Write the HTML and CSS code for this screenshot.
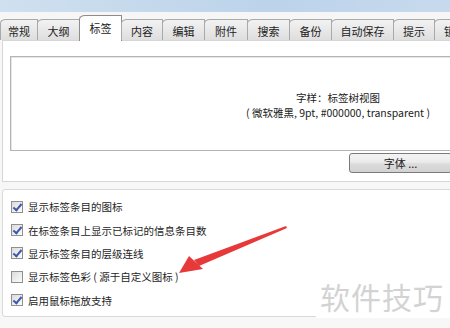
FILE: index.html
```html
<!DOCTYPE html>
<html lang="zh-CN">
<head>
    <meta charset="UTF-8">
    <title>标签选项</title>
    <link rel="stylesheet" href="styles.css">
</head>
<body>
    <div class="window">
        <div class="titlebar"></div>
        <div class="tabs">
            <div class="tab w37">常规</div>
            <div class="tab w42">大纲</div>
            <div class="tab w42 active">标签</div>
            <div class="tab w41">内容</div>
            <div class="tab w42">编辑</div>
            <div class="tab w43">附件</div>
            <div class="tab w42">搜索</div>
            <div class="tab w42">备份</div>
            <div class="tab w62">自动保存</div>
            <div class="tab w41">提示</div>
            <div class="tab w42 last">锁</div>
        </div>
        <div class="panel">
            <div class="preview">
                <div class="preview-text">
                    <div>字样：标签树视图</div>
                    <div>( 微软雅黑, 9pt, #000000, transparent )</div>
                </div>
            </div>
            <div class="btn-row">
                <button class="btn">字体 ...</button>
            </div>
        </div>
        <div class="group">
            <label class="row"><span class="box checked"></span>显示标签条目的图标</label>
            <label class="row"><span class="box checked"></span>在标签条目上显示已标记的信息条目数</label>
            <label class="row"><span class="box checked"></span>显示标签条目的层级连线</label>
            <label class="row"><span class="box"></span>显示标签色彩 ( 源于自定义图标 )</label>
            <label class="row"><span class="box checked"></span>启用鼠标拖放支持</label>
        </div>
    </div>

    <svg class="arrow" width="450" height="328" viewBox="0 0 450 328">
        <polygon points="286,226 287,228 199,266 194,260" fill="#e8393a"/>
        <polygon points="179,273 189,256 203,269" fill="#e8393a"/>
    </svg>
    <div class="watermark">软件技巧</div>
</body>
</html>
```

FILE: styles.css
```css
body {
    margin: 0;
    width: 450px;
    height: 328px;
    overflow: hidden;
    position: relative;
    background: #f7f7f7;
    font-family: "Noto Sans CJK SC", "Noto Sans", sans-serif;
    font-size: 10.5px;
    color: #1e1e1e;
}
.window {
    width: 680px;
}
.titlebar {
    height: 12px;
    background: linear-gradient(90deg, #cfe0ef, #bcd3ea 40%, #c9dbee 70%, #b9d0e8);
}
.tabs {
    display: flex;
    align-items: flex-end;
    height: 28px;
    background: #f6f6f6;
    position: relative;
    z-index: 1;
}
.tab {
    box-sizing: border-box;
    height: 21px;
    margin-right: -1px;
    border: 1px solid #a9a9a9;
    border-bottom: none;
    border-top-left-radius: 6px 4px;
    background: linear-gradient(#f2f2f2, #dedede);
    display: flex;
    justify-content: center;
    align-items: center;
    padding-top: 1px;
    font-size: 11px;
    color: #222;
}
.tab.active {
    background: #fff;
    border-color: #8c8c8c;
    margin-bottom: -1px;
    height: 26px;
    padding-bottom: 2px;
}
.tab.last {
    justify-content: flex-start;
    padding-left: 9px;
}
.w37 { width: 38px; }
.w41 { width: 42px; }
.w42 { width: 43px; }
.w43 { width: 44px; }
.w62 { width: 63px; }
.panel {
    margin-left: 2px;
    background: #fff;
    border: 1px solid #d6d6d6;
    padding: 15px 0 8px 7px;
}
.preview {
    width: 654px;
    height: 93px;
    border: 1px solid #b4b4b4;
    box-shadow: inset 1px 1px 0 #e6e6e6;
    display: flex;
    align-items: center;
    justify-content: center;
    background: #fff;
}
.preview-text {
    text-align: center;
    line-height: 15px;
    padding-top: 2px;
    color: #222;
}
.btn-row {
    padding: 2px 0 0 339px;
}
.btn {
    width: 103px;
    height: 20px;
    border: 1px solid #7a7a7a;
    border-radius: 3px;
    background: linear-gradient(#f4f4f4 0%, #ebebeb 45%, #dcdcdc 55%, #d2d2d2 100%);
    font-family: "Noto Sans CJK SC", sans-serif;
    font-size: 11px;
    color: #222;
    padding: 0;
}
.group {
    margin: 7px 0 0 2px;
    background: #fff;
    border: 1px solid #d9d9d9;
    border-radius: 3px;
    padding: 5px 0 4px 8px;
    height: 117px;
}
.row {
    display: flex;
    align-items: center;
    height: 23.4px;
}
.box {
    box-sizing: border-box;
    width: 12px;
    height: 12px;
    margin-right: 5px;
    border: 1px solid #8f8f8f;
    background: linear-gradient(135deg, #dcdcdc, #fbfbfb);
    position: relative;
}
.box.checked::after {
    content: "";
    position: absolute;
    left: 3px;
    top: 0px;
    width: 3px;
    height: 7px;
    border: solid #3d5aa8;
    border-width: 0 2px 2px 0;
    transform: rotate(40deg);
}
.arrow {
    position: absolute;
    left: 0;
    top: 0;
}
.watermark {
    position: absolute;
    left: 316px;
    top: 276px;
    padding: 2px 6px 4px 4px;
    background: #fff;
    font-size: 30px;
    line-height: 36px;
    color: #d3d3d3;
    letter-spacing: 1px;
}
```
